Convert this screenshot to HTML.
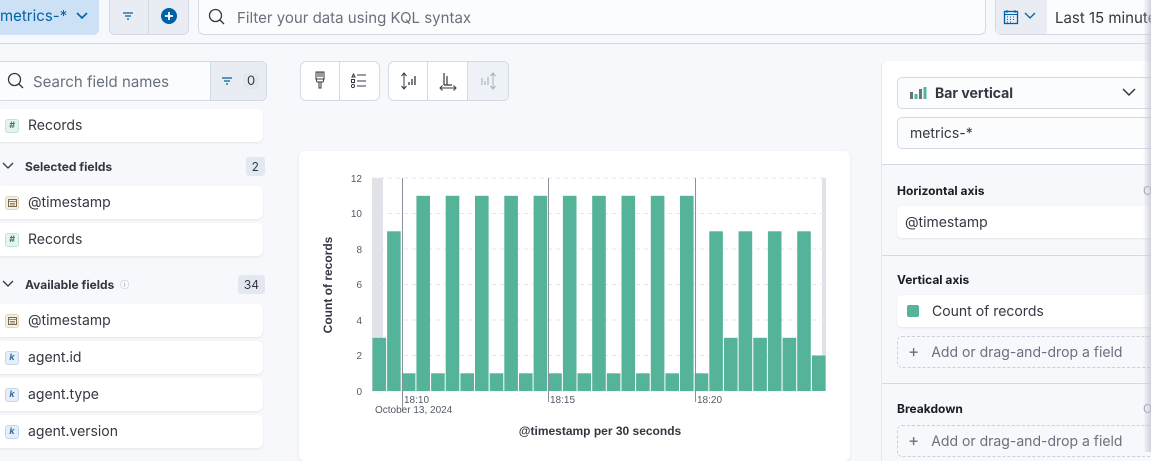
<!DOCTYPE html>
<html><head><meta charset="utf-8"><style>
*{box-sizing:border-box;margin:0;padding:0}
body{width:1151px;height:452px;overflow:hidden;background:#f7f8fc;font-family:"Inter","Liberation Sans",sans-serif;color:#343741;position:relative;font-size:14px}
.a{position:absolute}
.row{position:absolute;left:0;width:263px;height:33px;background:#fff;border-radius:0 6px 6px 0;box-shadow:0 1px 2px rgba(0,0,0,.08);display:flex;align-items:center;padding-left:5px;font-size:14px}
.tok{width:14px;height:14px;border-radius:3px;margin-right:9px;font-size:9px;font-weight:bold;display:flex;align-items:center;justify-content:center;font-style:italic}
.num{background:#e6f4ef;border:1px solid #bfe3d5;color:#3f7d66}
.date{background:#f4efe4;border:1px solid #dfd4bc;color:#7a6a4a}
.kw{background:#e6eef8;border:1px solid #c4d6ee;color:#3b6ea8}
.hdr{position:absolute;left:0;width:265px;font-size:12px;font-weight:bold;color:#343741;display:flex;align-items:center}
.badge{position:absolute;right:0;background:#e3e8f0;border-radius:3px;padding:2px 6px;font-size:12px;font-weight:normal;color:#343741}
.btn{position:absolute;background:#fff;border:1px solid #d3dae6;border-radius:6px;height:40px}
.lbl{position:absolute;left:897px;font-size:12px;font-weight:bold;color:#1a1c21}
.fld{position:absolute;left:897px;width:260px;height:32px;background:#fff;border-radius:5px;box-shadow:0 1px 2px rgba(0,0,0,.08);display:flex;align-items:center;padding-left:8px;font-size:14px}
.dash{position:absolute;left:897px;width:260px;height:32px;border:1px dashed #c9d0dc;border-radius:5px;display:flex;align-items:center;padding-left:8px;color:#69707d;font-size:14px}
</style></head><body>
<div class="a" style="left:0;top:0;width:1151px;height:44px;border-bottom:1px solid #d3dae6;background:#f7f8fc"></div>
<div class="a" style="left:-6px;top:0;width:105px;height:35px;background:#cce1f5;border-radius:0 0 6px 6px;font-size:15px;padding:6px 0 0 6px;color:#0061a6">metrics-* <svg width="14" height="10" style="margin-left:4px" viewBox="0 0 14 10"><path d="M2 2l5 5 5-5" fill="none" stroke="#0061a6" stroke-width="1.6"/></svg></div>
<div class="a" style="left:109px;top:-1px;width:80px;height:36px;background:#e9edf3;border:1px solid #d3dae6;border-radius:0 0 6px 6px"></div>
<div class="a" style="left:148px;top:0;width:1px;height:35px;background:#d3dae6"></div>
<svg class="a" style="left:121px;top:11px" width="14" height="10"><path d="M2 2h10M4 5h6M6 8h2" stroke="#0061a6" stroke-width="1.3"/></svg>
<svg class="a" style="left:160px;top:7px" width="18" height="18"><circle cx="9" cy="9" r="8" fill="#0061a6"/><path d="M9 5v8M5 9h8" stroke="#fff" stroke-width="1.8"/></svg>
<div class="a" style="left:198px;top:-1px;width:788px;height:36px;background:#fbfcfd;border:1px solid #d3dae6;border-radius:0 0 6px 6px"></div>
<svg class="a" style="left:208px;top:8px" width="18" height="18"><circle cx="7.5" cy="7.5" r="6" fill="none" stroke="#343741" stroke-width="1.3"/><path d="M12 12l4 4" stroke="#343741" stroke-width="1.3"/></svg>
<div class="a" style="left:237px;top:8px;font-size:15px;color:#69707d">Filter your data using KQL syntax</div>
<div class="a" style="left:995px;top:-1px;width:170px;height:36px;background:#fbfcfd;border:1px solid #d3dae6;border-radius:0 0 6px 6px"></div>
<div class="a" style="left:996px;top:0;width:51px;height:34px;background:#e9edf3"></div>
<svg class="a" style="left:1003px;top:9px" width="16" height="16"><rect x="1.5" y="2.5" width="13" height="12" fill="none" stroke="#0061a6" stroke-width="1.3"/><path d="M1.5 5.5h13M4 1v3M12 1v3" stroke="#0061a6"/><path d="M4 8h1M7 8h1M10 8h1M4 10.5h1M7 10.5h1M10 10.5h1M4 13h1M7 13h1" stroke="#0061a6"/></svg>
<svg class="a" style="left:1024px;top:12px" width="12" height="8"><path d="M1 1l5 5 5-5" fill="none" stroke="#0061a6" stroke-width="1.3"/></svg>
<div class="a" style="left:1055px;top:8px;font-size:15px;color:#343741;white-space:nowrap">Last 15 minutes</div>

<div class="a" style="left:-5px;top:61px;width:272px;height:40px;background:#fbfcfd;border:1px solid #d3dae6;border-radius:6px"></div>
<div class="a" style="left:210px;top:62px;width:56px;height:38px;background:#e9edf3;border-left:1px solid #d3dae6;border-radius:0 6px 6px 0"></div>
<svg class="a" style="left:7px;top:72px" width="18" height="18"><circle cx="7.5" cy="7.5" r="6" fill="none" stroke="#343741" stroke-width="1.3"/><path d="M12 12l4 4" stroke="#343741" stroke-width="1.3"/></svg>
<div class="a" style="left:33px;top:72px;font-size:15px;color:#69707d">Search field names</div>
<svg class="a" style="left:221px;top:76px" width="12" height="10"><path d="M1 2h10M3 5h6M5 8h2" stroke="#0061a6" stroke-width="1.2"/></svg>
<div class="a" style="left:243px;top:73px;font-size:13px;background:#e3e8f0;padding:0 4px;border-radius:3px">0</div>
<div class="row" style="top:109px"><span class="tok num">#</span>Records</div>
<div class="hdr" style="top:158px;height:16px"><svg width="12" height="8" style="margin:0 11px 0 2px"><path d="M1 1l5 5 5-5" fill="none" stroke="#343741" stroke-width="1.3"/></svg>Selected fields<span class="badge">2</span></div>
<div class="row" style="top:186px"><span class="tok date"><svg width="9" height="9"><rect x=".5" y="1.5" width="8" height="7" fill="none" stroke="#7a6a4a"/><path d="M.5 3.5h8M2 5.5h5M2 7h5" stroke="#7a6a4a" stroke-width=".7"/></svg></span>@timestamp</div>
<div class="row" style="top:223px"><span class="tok num">#</span>Records</div>
<div class="hdr" style="top:276px;height:16px"><svg width="12" height="8" style="margin:0 11px 0 2px"><path d="M1 1l5 5 5-5" fill="none" stroke="#343741" stroke-width="1.3"/></svg>Available fields <span style="font-size:9px;color:#98a2b3;margin-left:6px;font-weight:normal">ⓘ</span><span class="badge">34</span></div>
<div class="row" style="top:304px"><span class="tok date"><svg width="9" height="9"><rect x=".5" y="1.5" width="8" height="7" fill="none" stroke="#7a6a4a"/><path d="M.5 3.5h8M2 5.5h5M2 7h5" stroke="#7a6a4a" stroke-width=".7"/></svg></span>@timestamp</div>
<div class="row" style="top:341px"><span class="tok kw">k</span>agent.id</div>
<div class="row" style="top:378px"><span class="tok kw">k</span>agent.type</div>
<div class="row" style="top:415px"><span class="tok kw">k</span>agent.version</div>

<div class="btn" style="left:300px;top:61px;width:80px"></div>
<div class="a" style="left:339px;top:62px;width:1px;height:38px;background:#d3dae6"></div>
<div class="btn" style="left:388px;top:61px;width:121px"></div>
<div class="a" style="left:427px;top:62px;width:1px;height:38px;background:#d3dae6"></div>
<div class="a" style="left:467px;top:62px;width:41px;height:38px;background:#eef1f6;border-left:1px solid #d3dae6;border-radius:0 6px 6px 0"></div>
<svg class="a" style="left:312px;top:71px" width="16" height="20"><rect x="4" y="1" width="8" height="7" fill="none" stroke="#343741"/><path d="M6 1v5M8 1v5M10 1v5M4 8h8l-1 3H5z" stroke="#343741" fill="none"/><rect x="7" y="11" width="2" height="6" fill="none" stroke="#343741"/></svg>
<svg class="a" style="left:350px;top:72px" width="18" height="18"><path d="M2 5l1.5-3L5 5z" fill="none" stroke="#343741"/><rect x="1.5" y="7.5" width="3" height="3" fill="none" stroke="#343741"/><circle cx="3" cy="14" r="1.6" fill="none" stroke="#343741"/><path d="M7 3h9M7 9h9M7 14h9" stroke="#343741"/></svg>
<svg class="a" style="left:399px;top:71px" width="20" height="20"><path d="M5 2v16M2.5 5L5 2l2.5 3M2.5 15L5 18l2.5-3" fill="none" stroke="#343741"/><path d="M10 14v-3M13 14v-6M16 14v-9" stroke="#343741" stroke-width="1.3"/></svg>
<svg class="a" style="left:438px;top:71px" width="20" height="20"><path d="M6 2v12M9 5v9M6 14h8" stroke="#343741" stroke-width="1.2"/><path d="M2 17h16M4.5 14.5L2 17l2.5 2.5M15.5 14.5L18 17l-2.5 2.5" fill="none" stroke="#343741"/></svg>
<svg class="a" style="left:478px;top:71px" width="20" height="20"><path d="M15 2v16M12.5 5L15 2l2.5 3M12.5 15L15 18l2.5-3" fill="none" stroke="#a8b0bd"/><path d="M4 14v-7M7 14v-4M10 14v-8" stroke="#a8b0bd" stroke-width="1.1"/></svg>

<div class="a" style="left:299px;top:151px;width:551px;height:310px;background:#fff;border-radius:6px;box-shadow:0 1px 3px rgba(0,0,0,.08)"></div>
<svg class="a" style="left:299px;top:151px" width="551" height="301" font-family="Liberation Sans, sans-serif">
<g transform="translate(-299,-151)">
<rect x="372" y="178" width="11" height="213" fill="#e0e2e7"/>
<rect x="822" y="178" width="4" height="213" fill="#e0e2e7"/>
<g stroke="#e3e6ec" stroke-dasharray="4 4">
<line x1="372" x2="826" y1="178" y2="178"/><line x1="372" x2="826" y1="213.5" y2="213.5"/><line x1="372" x2="826" y1="249" y2="249"/><line x1="372" x2="826" y1="284.5" y2="284.5"/><line x1="372" x2="826" y1="320" y2="320"/><line x1="372" x2="826" y1="355.5" y2="355.5"/>
</g>
<g id="bars" fill="#54b399"></g>
<g stroke="#8a8f99" stroke-width="1"><line x1="402.5" x2="402.5" y1="178" y2="412"/><line x1="548.5" x2="548.5" y1="178" y2="402"/><line x1="695.5" x2="695.5" y1="178" y2="402"/></g>
<g font-size="10" fill="#535966" text-anchor="end">
<text x="362" y="182">12</text><text x="362" y="217">10</text><text x="362" y="253">8</text><text x="362" y="288">6</text><text x="362" y="324">4</text><text x="362" y="359">2</text><text x="362" y="395">0</text>
</g>
<g font-size="10" fill="#535966"><text x="404" y="403">18:10</text><text x="375" y="413">October 13, 2024</text><text x="550" y="403">18:15</text><text x="697" y="403">18:20</text></g>
<text x="600" y="435" font-size="12" font-weight="bold" fill="#343741" text-anchor="middle">@timestamp per 30 seconds</text>
<text transform="translate(332,285) rotate(-90)" font-size="12" font-weight="bold" fill="#343741" text-anchor="middle">Count of records</text>
</g></svg>
<script>
var v=[3,9,1,11,1,11,1,11,1,11,1,11,1,11,1,11,1,11,1,11,1,11,1,9,3,9,3,9,3,9,2];
var g=document.getElementById('bars'),s='';var pw=454/31;
v.forEach(function(n,i){var x=372+i*pw,h=n*213/12;s+='<rect x="'+(x+0.5).toFixed(1)+'" y="'+(391-h).toFixed(1)+'" width="'+(pw-1).toFixed(1)+'" height="'+h.toFixed(1)+'"/>';});
g.innerHTML=s;
</script>

<div class="a" style="left:881px;top:61px;width:280px;height:400px;background:#f7f8fc;border-left:1px solid #e3e8f0;border-radius:6px 0 0 0"></div>
<div class="a" style="left:882px;top:61px;width:279px;height:104px;background:#fff;border-bottom:1px solid #d3dae6;border-radius:6px 0 0 0"></div>
<div class="a" style="left:882px;top:255px;width:279px;height:1px;background:#d3dae6"></div>
<div class="a" style="left:882px;top:383px;width:279px;height:1px;background:#d3dae6"></div>
<div class="a" style="left:897px;top:77px;width:260px;height:32px;background:#fbfcfd;border:1px solid #d3dae6;border-radius:5px;display:flex;align-items:center;padding-left:12px;font-size:14px;font-weight:bold;color:#343741">
<svg width="17" height="12" style="margin-right:8px"><rect x="0" y="5" width="3" height="7" fill="#6a717d"/><rect x="4.5" y="7" width="3" height="5" fill="#54b399"/><rect x="9" y="2" width="3" height="10" fill="#6a717d"/><rect x="13.5" y="0" width="3" height="12" fill="#54b399"/></svg>Bar vertical</div>
<svg class="a" style="left:1122px;top:88px" width="14" height="9"><path d="M1 1l6 6 6-6" fill="none" stroke="#343741" stroke-width="1.5"/></svg>
<div class="a" style="left:897px;top:117px;width:260px;height:32px;background:#fbfcfd;border:1px solid #d3dae6;border-radius:5px;padding:7px 0 0 12px;font-size:14px">metrics-*</div>
<div class="lbl" style="top:183px">Horizontal axis</div>
<div class="fld" style="top:206px">@timestamp</div>
<div class="lbl" style="top:272px">Vertical axis</div>
<div class="fld" style="top:295px"><span style="width:12px;height:12px;background:#54b399;border-radius:2px;margin:0 13px 0 2px"></span>Count of records</div>
<div class="dash" style="top:336px"><span style="font-size:17px;margin:0 12px 0 2px">+</span>Add or drag-and-drop a field</div>
<div class="lbl" style="top:401px">Breakdown</div>
<div class="dash" style="top:425px"><span style="font-size:17px;margin:0 12px 0 2px">+</span>Add or drag-and-drop a field</div>
<div class="a" style="left:1143px;top:183px;font-size:12px;color:#98a2b3">O</div>
<div class="a" style="left:1143px;top:401px;font-size:12px;color:#98a2b3">O</div>
<div class="a" style="left:1143px;top:0;width:8px;height:452px;background:linear-gradient(90deg,rgba(200,205,215,0),rgba(190,195,205,.7))"></div>
</body></html>
